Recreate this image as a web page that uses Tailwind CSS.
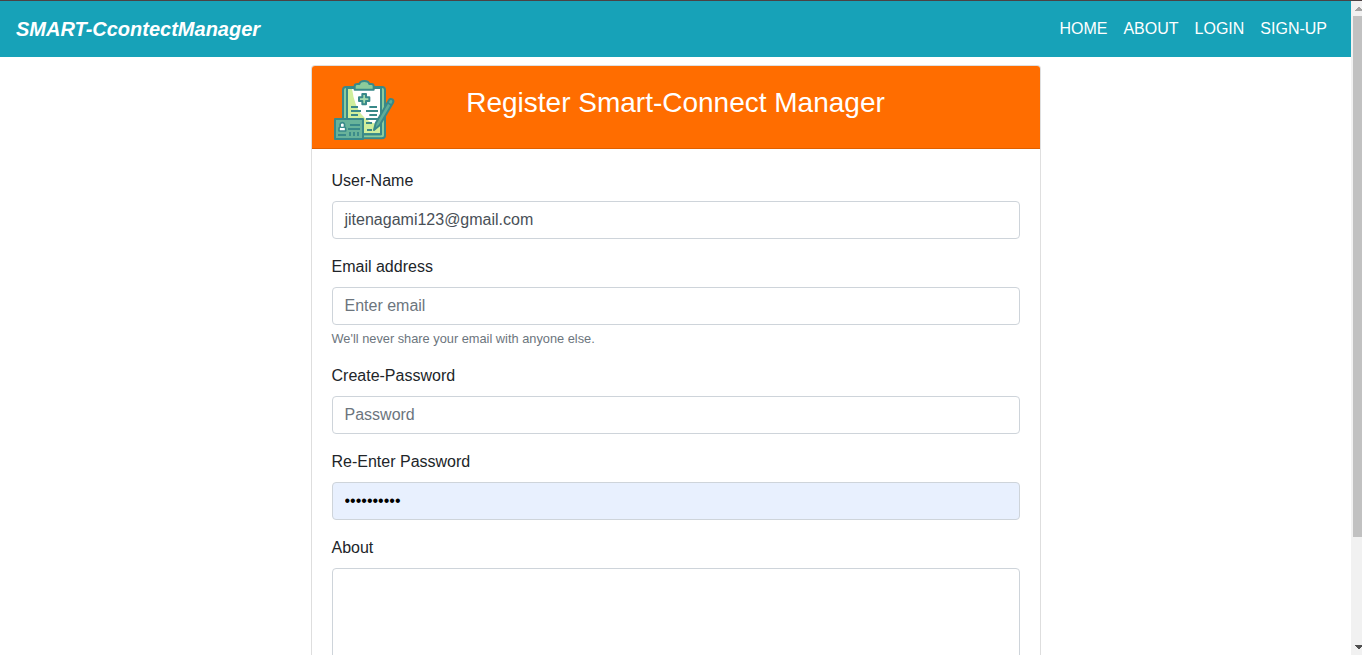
<!DOCTYPE html>
<html lang="en">
<head>
<meta charset="utf-8">
<title>Register Smart-Connect Manager</title>
<script src="https://cdn.jsdelivr.net/npm/@tailwindcss/browser@4"></script>
</head>
<body class="h-[655px] overflow-hidden bg-white font-['Liberation_Sans',Arial,sans-serif] text-base text-[#212529]">
<div class="h-px bg-[#4b4244]"></div>
<div class="flex h-[654px]">
  <div class="w-[1351px] shrink-0 overflow-hidden">
    <nav class="flex h-14 items-center justify-between bg-[#17a2b8] pl-4 pr-6 text-white">
      <a class="text-xl leading-[30px] font-bold italic">SMART-CcontectManager</a>
      <ul class="flex gap-4 leading-6">
        <li>HOME</li><li>ABOUT</li><li>LOGIN</li><li>SIGN-UP</li>
      </ul>
    </nav>
    <main class="mx-auto mt-2 w-[730px] rounded-t border border-b-0 border-black/[.125]">
      <header class="relative h-[83px] rounded-t-[3px] border-b border-black/[.125] bg-[#ff6d00] pt-5">
        <svg class="absolute left-[12.5px] top-[6px]" width="80" height="76" viewBox="0 0 240 228" fill="none" stroke="#398989" stroke-width="6" stroke-linejoin="round" stroke-linecap="round">
          <rect x="57" y="45" width="126" height="154" rx="9" fill="#8ccc9b"/>
          <path d="M69 48H171V187H69Z" fill="#d0ee9c"/>
          <path d="M84 50H169V158Q98 150 84 50Z" fill="#fff" stroke="none"/>
          <path d="M69 48H171V187H69Z"/>
          <path d="M92 53V43Q92 36 100 36H106Q108 27 121 27Q134 27 136 36H142Q149 36 149 43V53Z" fill="#8ccc9b"/>
          <path d="M115 66H126V76H136V87H126V97H115V87H105V76H115Z" fill="#a5dcae"/>
          <g stroke-linecap="butt">
            <path d="M136 105H159M81 105H102M126 117H162M81 117H111M136 129H159M81 129H102M81 141H111M126 141H162M126 153H144M129 174H144"/>
          </g>
          <path d="M150 174L155 154L194 86Q198 78 205 82Q211 87 206 94L167 160Z" fill="#5fac98"/>
          <path d="M191 92L201 99" stroke-width="5"/>
          <rect x="33" y="141" width="84" height="60" fill="#68b39a"/>
          <g stroke-linecap="butt">
            <path d="M78 159H108M72 171H108M42 189H66M78 180V192M90 180V192M102 180V192" stroke-width="5.5"/>
          </g>
          <path d="M45 177V170Q45 166 49 165Q46 152 55 152Q64 152 61 165Q65 166 65 170V177Z" fill="#fff" stroke-width="5"/>
          <path d="M51 166H59" stroke-width="4"/>
        </svg>
        <h1 class="text-center text-[28px] leading-[33.6px] text-white">Register Smart-Connect Manager</h1>
      </header>
      <form class="flex flex-col gap-4 p-5">
        <div>
          <label class="mb-2 block leading-6">User-Name</label>
          <div class="h-[38px] rounded border border-[#ced4da] px-3 py-1.5 leading-6 text-[#495057]">jitenagami123@gmail.com</div>
        </div>
        <div class="h-[93px]">
          <label class="mb-2 block leading-6">Email address</label>
          <div class="h-[38px] rounded border border-[#ced4da] px-3 py-1.5 leading-6 text-[#6c757d]">Enter email</div>
          <small class="mt-1 block text-[12.8px] leading-[19.2px] text-[#6c757d]">We'll never share your email with anyone else.</small>
        </div>
        <div>
          <label class="mb-2 block leading-6">Create-Password</label>
          <div class="h-[38px] rounded border border-[#ced4da] px-3 py-1.5 leading-6 text-[#6c757d]">Password</div>
        </div>
        <div>
          <label class="mb-2 block leading-6">Re-Enter Password</label>
          <input type="password" value="abcdefghij" class="block h-[38px] w-full rounded border border-[#ced4da] bg-[#e8f0fe] px-3 py-1.5 leading-6 text-black">
        </div>
        <div>
          <label class="mb-2 block leading-6">About</label>
          <div class="h-[260px] rounded border border-[#ced4da]"></div>
        </div>
      </form>
    </main>
  </div>
  <aside class="flex w-[11px] shrink-0 flex-col justify-between bg-[#f1f1f1]">
    <svg width="11" height="15" class="shrink-0" shape-rendering="crispEdges"><path d="M4 10V9H5V8H6V7H7V6H9V7H10V8H11V10Z" fill="#a3a3a3"/></svg>
    <div class="ml-0.5 h-[521px] bg-[#c1c1c1]"></div>
    <div class="flex grow items-end"><svg width="11" height="15" shape-rendering="crispEdges"><path d="M4 5H11V7H10V8H9V9H7V8H6V7H5V6H4Z" fill="#505050"/></svg></div>
  </aside>
</div>
</body>
</html>
